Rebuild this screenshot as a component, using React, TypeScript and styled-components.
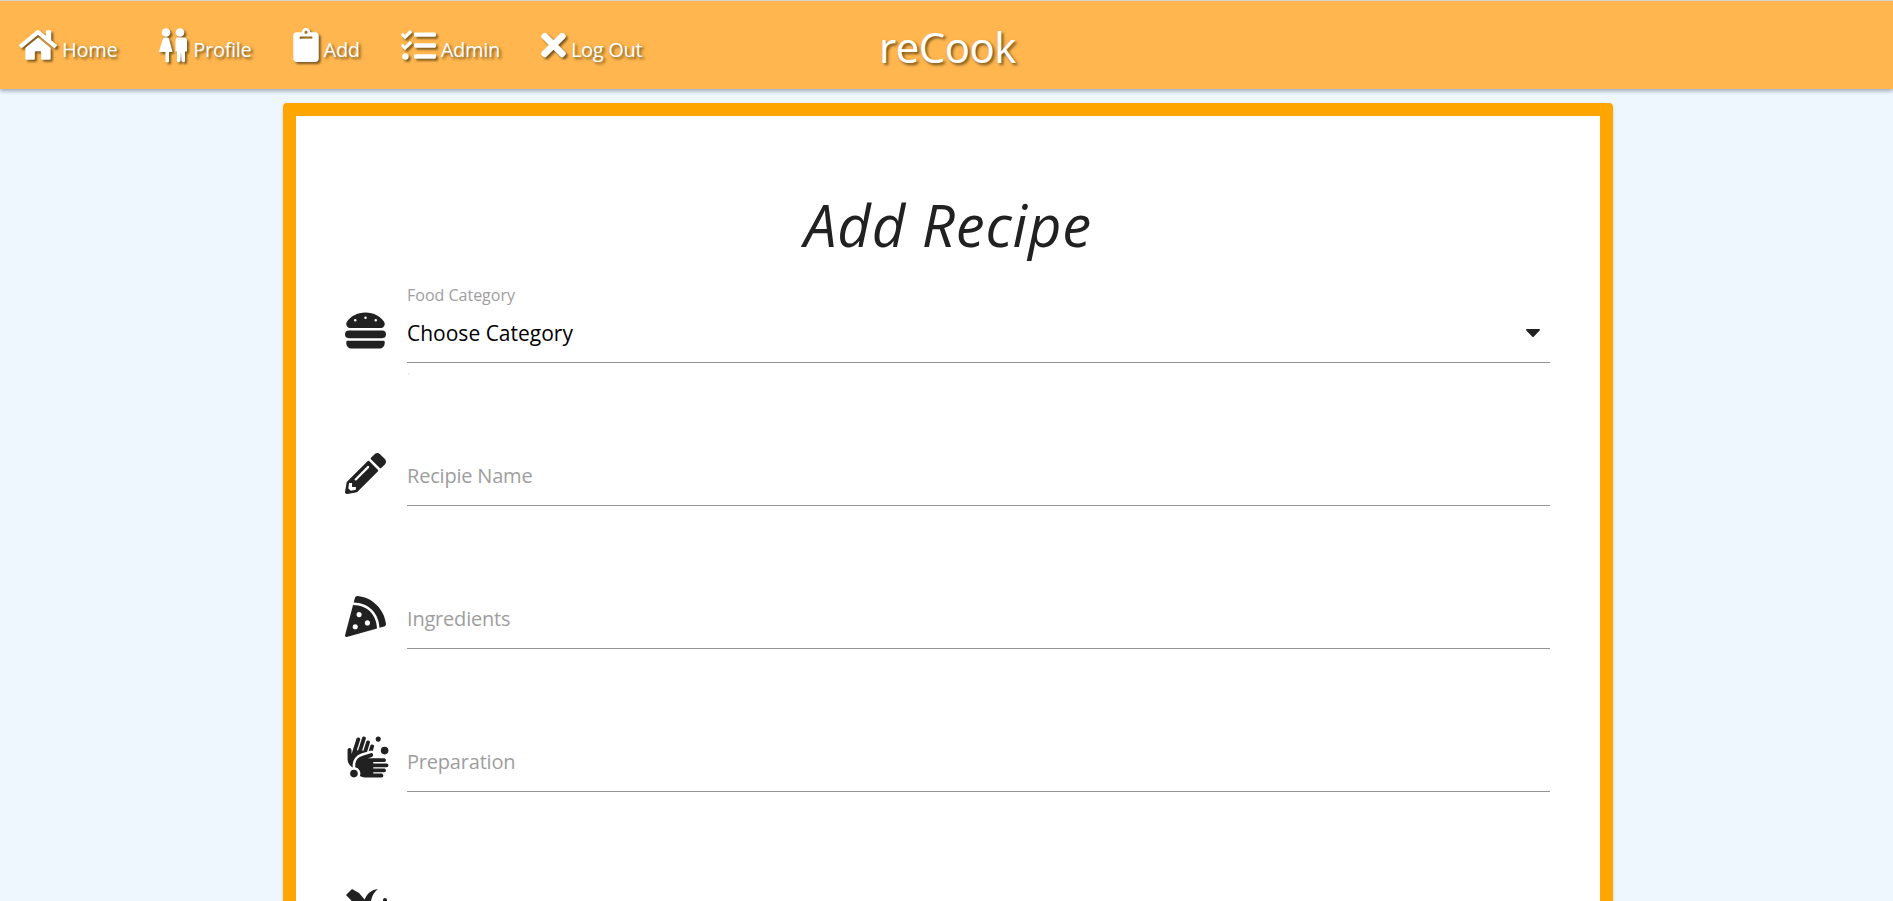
import React from 'react';
import styled, { createGlobalStyle } from 'styled-components';
import { FaHamburger, FaPencilAlt, FaPizzaSlice, FaHandsWash, FaHome, FaClipboard, FaTasks, FaTimes, FaCaretDown } from 'react-icons/fa';

const GlobalStyle = createGlobalStyle`
  html, body {
    margin: 0;
    height: 100%;
    overflow: hidden;
    background: #eef6fe;
    font-family: "Open Sans", "Noto Sans", sans-serif;
  }
`;

const NavBar = styled.header`
  position: relative;
  height: 88px;
  border-top: 1px solid #d4d4d4;
  background: #ffb64f;
  box-shadow: 0 2px 4px rgba(60, 70, 90, 0.45);
  display: flex;
  align-items: center;
  padding-left: 19px;
  gap: 41px;
  color: #fff;
`;

const NavLink = styled.a`
  display: flex;
  align-items: center;
  gap: 5px;
  height: 44px;
  color: #fff;
  svg {
    filter: drop-shadow(2px 2px 1px rgba(70, 50, 10, 0.7));
    flex: none;
  }
`;

const NavLabel = styled.span`
  margin-top: 9px;
  font-size: 20px;
  letter-spacing: -0.3px;
  line-height: 22px;
  text-shadow: 2px 2px 3px rgba(70, 50, 10, 0.75);
`;

const ClipboardIcon = styled(FaClipboard)`
  width: 26px;
  height: 34px;
`;

const TimesIcon = styled(FaTimes)`
  width: 25px;
  height: 36px;
`;

const Brand = styled.div`
  position: absolute;
  left: 879px;
  top: 21px;
  font-size: 42px;
  line-height: 50px;
  letter-spacing: -0.5px;
  color: #fff;
  text-shadow: 2px 2px 3px rgba(70, 50, 10, 0.75);
`;

const Main = styled.main`
  display: flex;
  justify-content: center;
  padding-top: 14px;
`;

const Card = styled.section`
  box-sizing: border-box;
  width: 1330px;
  margin-left: 3px;
  height: 900px;
  border: 13px solid #ffa500;
  border-radius: 4px;
  background: #fff;
  box-shadow: 0 2px 4px rgba(0, 0, 0, 0.12);
  padding: 0 50px 0 48px;
`;

const Title = styled.h1`
  margin: 74px 0 0;
  padding-left: 2px;
  height: 70px;
  text-align: center;
  font-size: 58px;
  font-weight: 400;
  font-style: italic;
  line-height: 70px;
  letter-spacing: 0.8px;
  color: #212121;
`;

const Row = styled.div`
  display: flex;
  align-items: flex-end;
  height: 143px;
  &:first-of-type {
    height: 103px;
  }
`;

const IconSlot = styled.div`
  width: 63px;
  flex: none;
  display: flex;
  align-items: center;
  color: #212121;
  padding-bottom: 12px;
  padding-left: 1px;
  box-sizing: border-box;
`;

const Field = styled.div<{ $tall?: boolean }>`
  position: relative;
  flex: 1;
  height: ${(props) => (props.$tall ? '78px' : '59px')};
  border-bottom: 1px solid #949494;
  display: flex;
  align-items: flex-end;
  padding-bottom: 16px;
  box-sizing: border-box;
  line-height: 26px;
`;

const Placeholder = styled.span`
  color: #9e9e9e;
  font-size: 20px;
  letter-spacing: -0.2px;
`;

const Value = styled.span`
  color: #000;
  font-size: 21px;
`;

const FloatLabel = styled.label`
  position: absolute;
  left: 0;
  top: 0;
  font-size: 16px;
  line-height: 20px;
  color: #9e9e9e;
`;

const Caret = styled.span`
  position: absolute;
  right: 5px;
  top: 35px;
  display: flex;
  color: #212121;
`;

const Speck = styled.span`
  position: absolute;
  left: 1px;
  top: calc(100% + 11px);
  width: 2px;
  height: 2px;
  border-radius: 50%;
  background: #e8e8e8;
`;

const App: React.FC = () => (
  <>
    <GlobalStyle />
    <NavBar>
      <NavLink><FaHome size={38} /><NavLabel>Home</NavLabel></NavLink>
      <NavLink><PeopleIcon /><NavLabel>Profile</NavLabel></NavLink>
      <NavLink><ClipboardIcon /><NavLabel>Add</NavLabel></NavLink>
      <NavLink><FaTasks size={35} /><NavLabel>Admin</NavLabel></NavLink>
      <NavLink><TimesIcon /><NavLabel>Log Out</NavLabel></NavLink>
      <Brand>reCook</Brand>
    </NavBar>
    <Main>
      <Card>
        <Title>Add Recipe</Title>
        <Row>
          <IconSlot><FaHamburger size={41} /></IconSlot>
          <Field $tall>
            <FloatLabel>Food Category</FloatLabel>
            <Value>Choose Category</Value>
            <Caret><FaCaretDown size={24} /></Caret>
            <Speck />
          </Field>
        </Row>
        <Row>
          <IconSlot><FaPencilAlt size={41} /></IconSlot>
          <Field><Placeholder>Recipie Name</Placeholder></Field>
        </Row>
        <Row>
          <IconSlot><FaPizzaSlice size={41} /></IconSlot>
          <Field><Placeholder>Ingredients</Placeholder></Field>
        </Row>
        <Row>
          <IconSlot><FaHandsWash size={46} /></IconSlot>
          <Field><Placeholder>Preparation</Placeholder></Field>
        </Row>
        <Row>
          <IconSlot><CrossedToolsIcon /></IconSlot>
          <Field />
        </Row>
      </Card>
    </Main>
  </>
);

function PeopleIcon() {
  return (
    <svg width="30" height="35" viewBox="0 0 30 35" fill="currentColor">
      <circle cx="8" cy="4.5" r="4.3" />
      <circle cx="22" cy="4.5" r="4.3" />
      <path d="M5 10.5c.5-.7 1.2-1 2-1h2c.8 0 1.5.3 2 1L14.5 24H11v9.5c0 1.2-3.5 1.2-3.5 0V24H.8z" />
      <path d="M18.5 9.5h7.5c1.8 0 3 1.2 3 3V23.5h-2V33c0 1.5-3 1.5-3.5 0l-.5-9-.5 9c-.5 1.5-3.5 1.5-3.5 0V23.5h-1.5V12.5c0-1.6.8-3 1.5-3z" />
    </svg>
  );
}

function CrossedToolsIcon() {
  return (
    <svg width="44" height="44" viewBox="0 0 44 44" fill="currentColor">
      <path d="M1 16l6-6 7 4 26 30H28z" />
      <path d="M18 30C18 20 23 11 33 10c-5 4-6 8-7 12l-2 8z" />
      <circle cx="40" cy="21" r="2" />
    </svg>
  );
}

export default App;
